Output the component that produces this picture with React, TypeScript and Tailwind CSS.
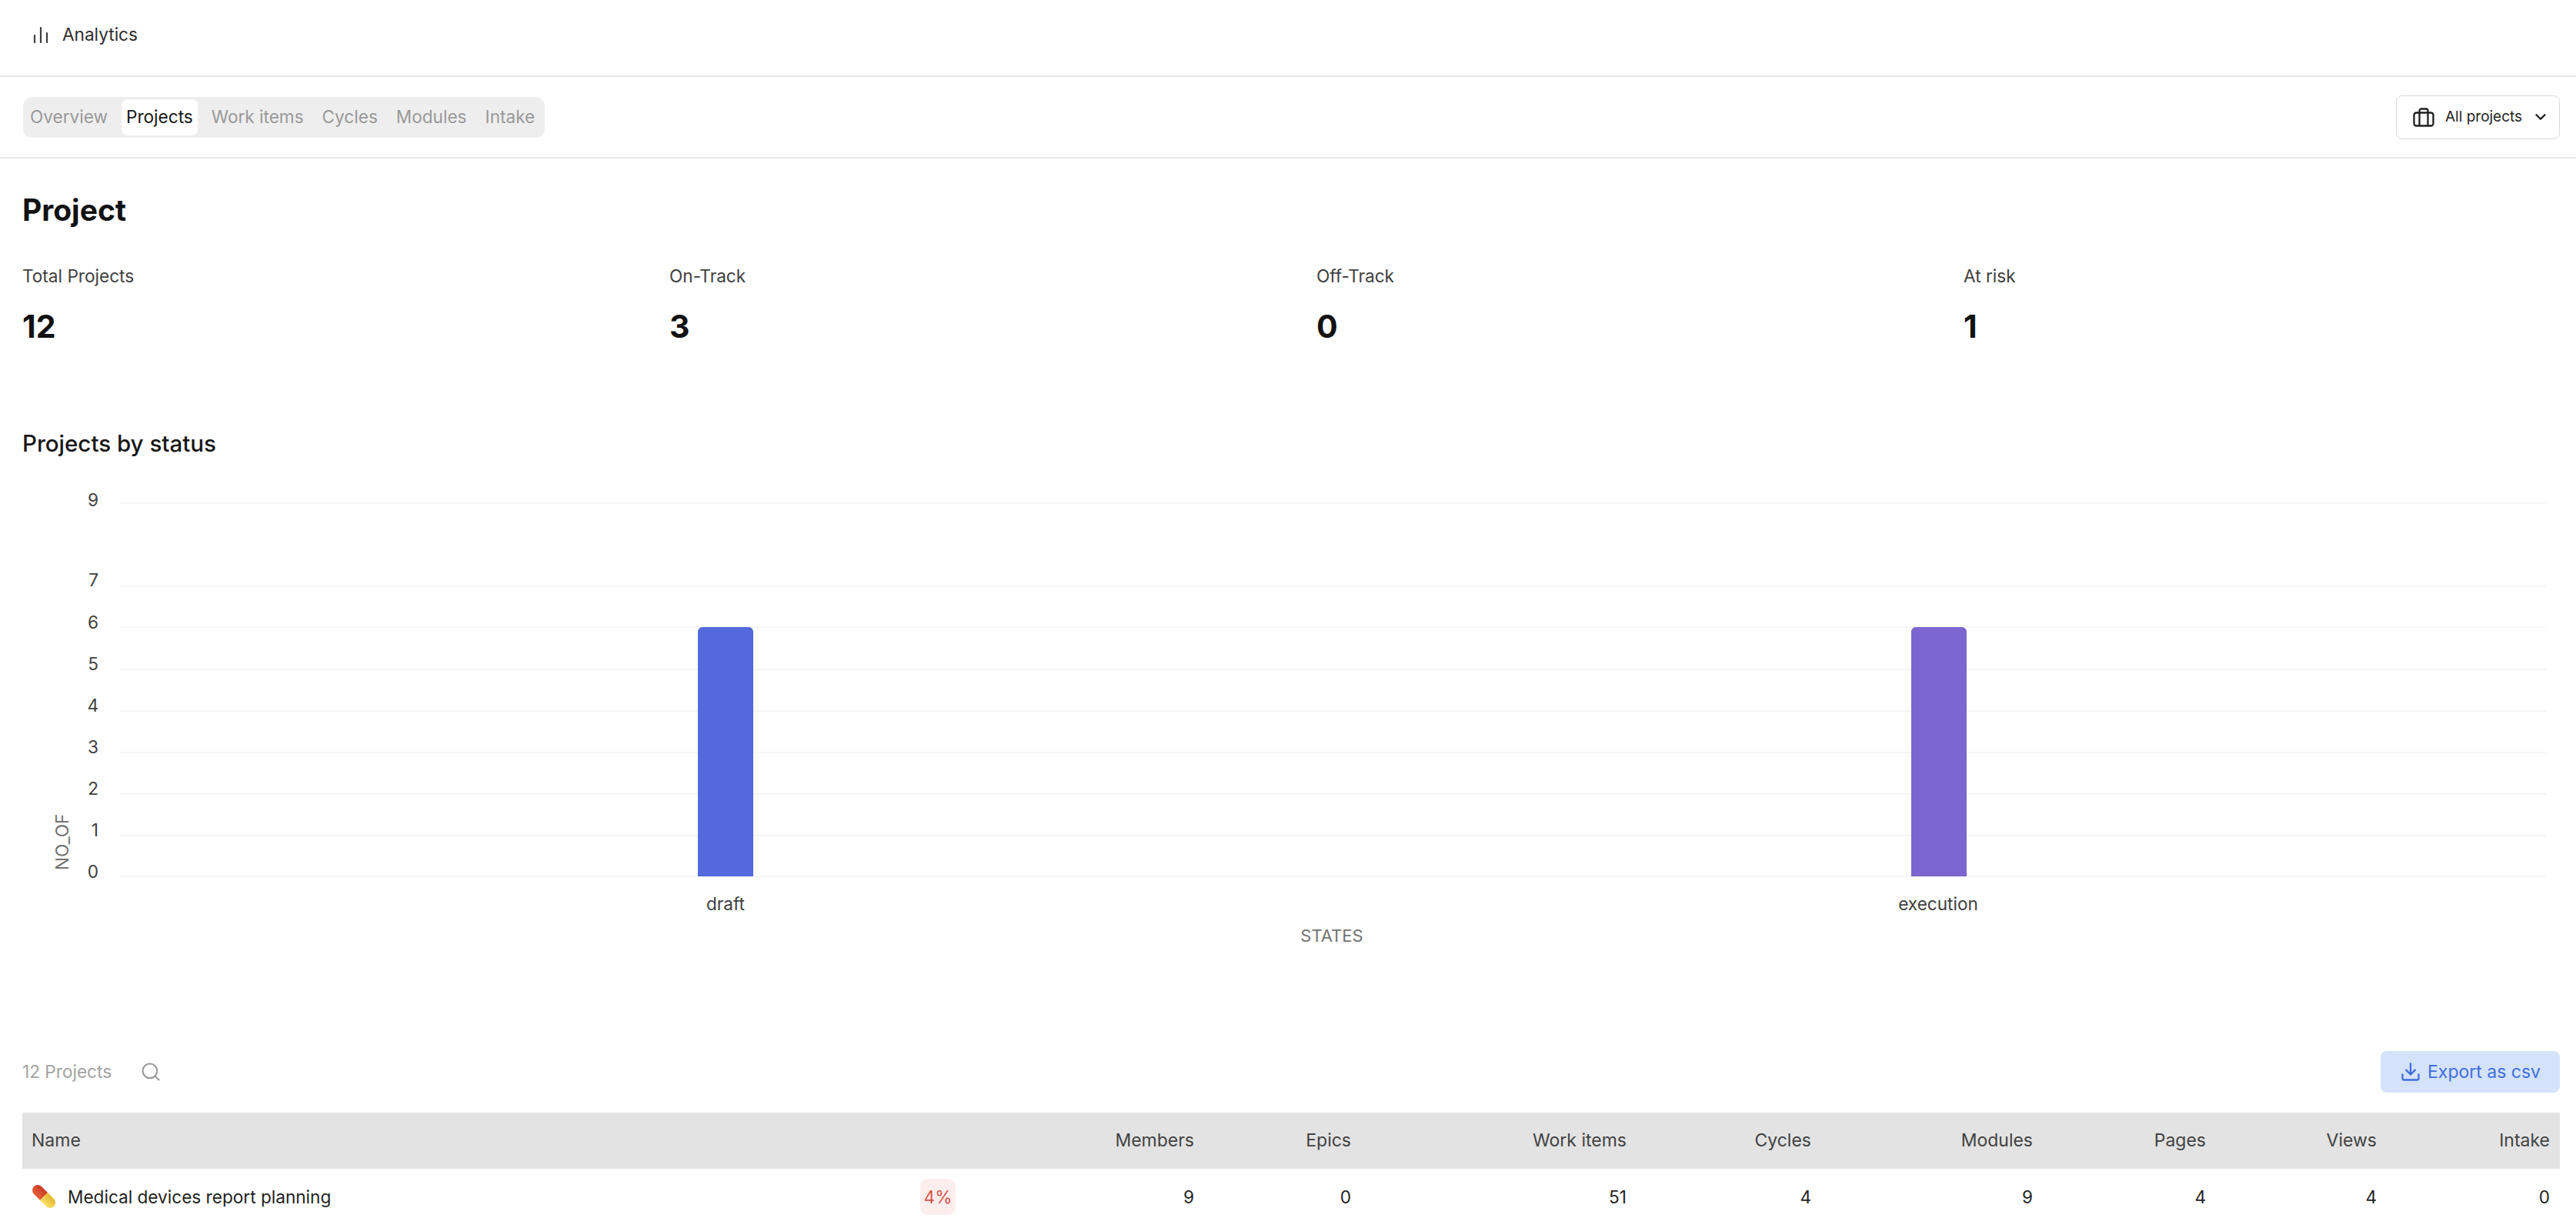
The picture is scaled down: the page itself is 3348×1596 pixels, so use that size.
import { ChevronDown, Download, Search } from "lucide-react";

const tabs = ["Overview", "Projects", "Work items", "Cycles", "Modules", "Intake"];

const stats = [
  { label: "Total Projects", value: 12 },
  { label: "On-Track", value: 3 },
  { label: "Off-Track", value: 0 },
  { label: "At risk", value: 1 },
];

const ticks = [
  { label: "9", y: 55, textY: 59 },
  { label: "7", y: 163, textY: 163 },
  { label: "6", y: 216, textY: 218 },
  { label: "5", y: 271, textY: 272 },
  { label: "4", y: 325, textY: 326 },
  { label: "3", y: 379, textY: 380 },
  { label: "2", y: 433, textY: 434 },
  { label: "1", y: 487, textY: 488 },
  { label: "0", y: 540, textY: 542 },
];

const columns = [
  { name: "Members", value: 9, width: "w-[240px]" },
  { name: "Epics", value: 0, width: "w-[204px]" },
  { name: "Work items", value: 51, width: "w-[358px]" },
  { name: "Cycles", value: 4, width: "w-[240px]" },
  { name: "Modules", value: 9, width: "w-[288px]" },
  { name: "Pages", value: 4, width: "w-[225px]" },
  { name: "Views", value: 4, width: "w-[222px]" },
  { name: "Intake", value: 0, width: "w-[225px]" },
];

function AnalyticsIcon() {
  return (
    <svg width="20" height="22" viewBox="0 0 20 22" fill="none" stroke="#3f3f3f" strokeWidth="2.2" strokeLinecap="round">
      <path d="M2 21v-9M10 21V2M18 21V9" />
    </svg>
  );
}

function BriefcaseIcon() {
  return (
    <svg width="28" height="25" viewBox="0 0 28 25" fill="none" stroke="#1f1f1f" strokeWidth="2.3" strokeLinejoin="round">
      <rect x="1.5" y="6.5" width="25" height="17" rx="3" />
      <path d="M8.5 23.5V4a2.5 2.5 0 0 1 2.5-2.5h6A2.5 2.5 0 0 1 19.5 4v19.5" />
    </svg>
  );
}

function PillIcon() {
  return (
    <svg width="30" height="30" viewBox="0 0 30 30" className="overflow-visible">
      <defs>
        <linearGradient id="pill-red" x1="0" y1="0" x2="1" y2="0">
          <stop offset="0" stopColor="#e8603a" />
          <stop offset="1" stopColor="#c93a22" />
        </linearGradient>
        <linearGradient id="pill-yellow" x1="0" y1="0" x2="1" y2="0">
          <stop offset="0" stopColor="#fbe36a" />
          <stop offset="1" stopColor="#e3b52e" />
        </linearGradient>
      </defs>
      <g transform="rotate(-45 15 15)">
        <path d="M8 15V3.7a7 7 0 0 1 14 0V15z" fill="url(#pill-red)" />
        <path d="M8 15v11.3a7 7 0 0 0 14 0V15z" fill="url(#pill-yellow)" />
      </g>
    </svg>
  );
}

function ProjectsChart() {
  return (
    <svg width="3348" height="640" viewBox="0 0 3348 640" className="mt-[3px] block" style={{ fontFamily: "Inter, sans-serif" }}>
      {ticks.map((t) => (
        <g key={t.label}>
          <line x1="156" x2="3309" y1={t.y} y2={t.y} stroke="#f5f5f5" strokeWidth="2" />
          <text x="128" y={t.textY} textAnchor="end" fontSize="22.6" fill="#404040">
            {t.label}
          </text>
        </g>
      ))}
      <path d="M907 540V222a6 6 0 0 1 6-6h60a6 6 0 0 1 6 6v318z" fill="#5369dc" />
      <path d="M2484 540V222a6 6 0 0 1 6-6h60a6 6 0 0 1 6 6v318z" fill="#7c66cf" />
      <text x="943" y="584" textAnchor="middle" fontSize="22.6" fill="#404040">
        draft
      </text>
      <text x="2519" y="584" textAnchor="middle" fontSize="22.6" fill="#404040">
        execution
      </text>
      <text x="1731" y="625" textAnchor="middle" fontSize="22" fill="#737373">
        STATES
      </text>
      <text transform="translate(89 532) rotate(-90)" fontSize="22.6" fill="#737373">
        NO_OF
      </text>
    </svg>
  );
}

export default function App() {
  return (
    <div className="h-[1596px] w-[3348px] overflow-hidden bg-white font-['Inter',sans-serif] text-[#171717]">
      <header className="flex h-[100px] items-center gap-[18px] border-b-2 border-[#e8e8e8] pb-[8px] pl-[43px]">
        <AnalyticsIcon />
        <span className="text-[22.6px] text-[#2e2e2e]">Analytics</span>
      </header>

      <div className="flex h-[106px] items-center justify-between border-b-2 border-[#e8e8e8] pl-[30px] pr-[21px]">
        <div className="flex h-[53px] items-center gap-[12px] rounded-[12px] bg-[#eeeeee] py-[3px] pl-[3px] pr-[7px]">
          {tabs.map((tab) => (
            <span
              key={tab}
              className={
                tab === "Projects"
                  ? "flex h-[47px] items-center rounded-[8px] bg-white px-[6px] text-[22.6px] text-[#171717]"
                  : "flex h-[47px] items-center px-[6px] text-[22.6px] text-[#999999]"
              }
            >
              {tab}
            </span>
          ))}
        </div>
        <button className="flex h-[57px] w-[213px] items-center rounded-[8px] border-[1.5px] border-[#d9d9d9] bg-white pl-[21px] text-[19px] text-[#1f1f1f]">
          <BriefcaseIcon />
          <span className="ml-[14px]">All projects</span>
          <ChevronDown size={22} strokeWidth={2.6} className="ml-[13px]" />
        </button>
      </div>

      <main className="pl-[29px] pr-[21px]">
        <h1 className="mt-[44px] text-[39px] font-bold leading-[46px] text-[#121212]">Project</h1>
        <div className="mt-[46px] grid grid-cols-4 gap-x-[66px]">
          {stats.map((s) => (
            <div key={s.label}>
              <p className="text-[22.6px] leading-[34px] text-[#404040]">{s.label}</p>
              <p className="mt-[24px] text-[41px] font-bold leading-[48px] text-[#121212]">{s.value}</p>
            </div>
          ))}
        </div>
        <h2 className="mt-[108px] text-[29.5px] font-medium leading-[40px] text-[#171717]">Projects by status</h2>
      </main>

      <ProjectsChart />

      <div className="mt-[127px] flex items-center justify-between pl-[29px] pr-[21px]">
        <div className="flex items-center gap-[37px] text-[22.6px] text-[#a3a3a3]">
          <span>12 Projects</span>
          <Search size={28} strokeWidth={1.8} className="text-[#999999]" />
        </div>
        <button className="flex h-[54px] w-[233px] items-center justify-center gap-[8px] rounded-[8px] bg-[#d5e2fb] text-[23px] text-[#3f6fdb]">
          <Download size={28} strokeWidth={2} />
          <span>Export as csv</span>
        </button>
      </div>

      <div className="ml-[29px] mr-[21px] mt-[26px]">
        <div className="flex h-[73px] items-center bg-[#e3e3e3] pl-[12px] pr-[13px] text-[23px] text-[#424242]">
          <span className="flex-1">Name</span>
          {columns.map((c) => (
            <span key={c.name} className={`${c.width} text-right`}>
              {c.name}
            </span>
          ))}
        </div>
        <div className="flex h-[73px] items-center pl-[13px] pr-[13px] text-[22.6px] text-[#1f1f1f]">
          <div className="flex flex-1 items-center gap-[16px]">
            <PillIcon />
            <span>Medical devices report planning</span>
          </div>
          <span className="mr-[70px] flex h-[47px] w-[46px] items-center justify-center rounded-[10px] bg-[#fdeeee] text-[#d9534f]">
            4%
          </span>
          {columns.map((c) => (
            <span key={c.name} className={`${c.width} text-right`}>
              {c.value}
            </span>
          ))}
        </div>
      </div>
    </div>
  );
}
